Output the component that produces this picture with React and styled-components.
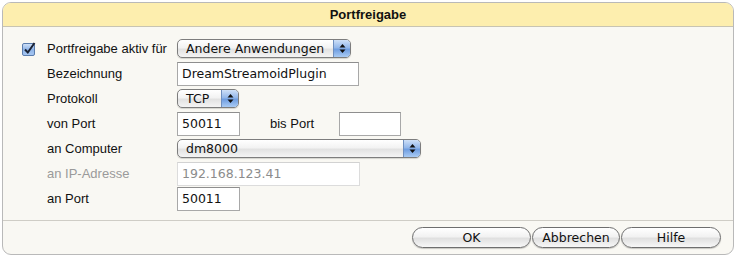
import React from "react";
import styled, { createGlobalStyle } from "styled-components";

const GlobalStyle = createGlobalStyle`
  html, body {
    margin: 0;
    padding: 0;
    background: #ffffff;
  }
  body {
    font-family: "Liberation Sans", Arial, sans-serif;
    font-size: 13px;
    color: #111;
  }
`;

const Panel = styled.div`
  margin: 2px;
  width: 730px;
  height: 251px;
  border: 1px solid #b9b9b9;
  border-radius: 9px;
  background: #f9f8f3;
  overflow: hidden;
  display: flex;
  flex-direction: column;
`;

const Header = styled.div`
  height: 23px;
  background: #fdeeae;
  border-bottom: 1px solid #c8c4b2;
  display: flex;
  align-items: center;
  justify-content: center;
  font-weight: bold;
  font-size: 13px;
  color: #111;
`;

const Form = styled.div`
  padding: 9px 0 9px 19px;
  display: flex;
  flex-direction: column;
  border-bottom: 1px solid #cfcdc6;
`;

const Row = styled.div`
  height: 25px;
  display: flex;
  align-items: center;
`;

const CheckSlot = styled.div`
  width: 25px;
  display: flex;
  align-items: center;
`;

const Label = styled.div`
  width: 130px;
  color: ${(p) => (p.$disabled ? "#9a9a9a" : "#111")};
`;

const MidLabel = styled.div`
  width: 99px;
  padding-left: 30px;
  box-sizing: border-box;
  color: #111;
`;

const Input = styled.div`
  box-sizing: border-box;
  width: ${(p) => p.$w}px;
  height: 24px;
  border: 1px solid ${(p) => (p.$disabled ? "#dcdcdc" : "#a8a8a8")};
  border-top-color: ${(p) => (p.$disabled ? "#d2d2d2" : "#8e8e8e")};
  background: #fff;
  font-family: "DejaVu Sans", "Lucida Grande", sans-serif;
  font-size: 12.5px;
  color: ${(p) => (p.$disabled ? "#8c8c8c" : "#111")};
  padding-left: 4px;
  display: flex;
  align-items: center;
`;

const Select = styled.div`
  box-sizing: border-box;
  width: ${(p) => p.$w}px;
  height: 19px;
  border: 1px solid #7d7d7d;
  border-radius: 5px;
  background: linear-gradient(#ffffff 0%, #f3f3f3 45%, #e2e2e2 55%, #f4f4f4 100%);
  display: flex;
  align-items: center;
  overflow: hidden;
  box-shadow: 0 1px 1px rgba(0, 0, 0, 0.15);
`;

const SelectText = styled.div`
  flex: 1;
  padding-left: 8px;
  font-family: "DejaVu Sans", "Lucida Grande", sans-serif;
  font-size: 12.5px;
  color: #111;
  white-space: nowrap;
`;

const Arrows = styled.div`
  width: 16px;
  height: 100%;
  border-left: 1px solid #6f8fbf;
  background: linear-gradient(#cfe0f7 0%, #93b7ea 45%, #6f9de0 55%, #a9cbf4 100%);
  display: flex;
  align-items: center;
  justify-content: center;
`;

const Footer = styled.div`
  flex: 1;
  display: flex;
  justify-content: flex-end;
  align-items: center;
  padding-right: 12px;
  gap: 1px;
`;

const Button = styled.div`
  box-sizing: border-box;
  width: ${(p) => p.$w}px;
  height: 21px;
  border: 1px solid #6e6e6e;
  border-radius: 11px;
  background: linear-gradient(#ffffff 0%, #f2f2f2 45%, #e0e0e0 55%, #f7f7f7 100%);
  display: flex;
  align-items: center;
  justify-content: center;
  font-family: "DejaVu Sans", "Lucida Grande", sans-serif;
  font-size: 12.5px;
  color: #111;
  box-shadow: 0 1px 1px rgba(0, 0, 0, 0.2);
`;

function UpDown() {
  return (
    <svg width="7" height="11" viewBox="0 0 7 11">
      <path d="M3.5 1 L6.5 4.5 L0.5 4.5 Z" fill="#111" />
      <path d="M3.5 10 L6.5 6.5 L0.5 6.5 Z" fill="#111" />
    </svg>
  );
}

function Checkbox() {
  return (
    <svg width="14" height="14" viewBox="0 0 14 14">
      <defs>
        <linearGradient id="cb" x1="0" y1="0" x2="0" y2="1">
          <stop offset="0" stopColor="#d4e4f8" />
          <stop offset="0.5" stopColor="#8fb4e8" />
          <stop offset="1" stopColor="#a8c8f2" />
        </linearGradient>
      </defs>
      <rect x="0.5" y="1.5" width="12" height="12" rx="1.5" fill="url(#cb)" stroke="#5b7dad" />
      <path d="M3 7.5 L5.8 10.5 L12.5 1" fill="none" stroke="#1a2233" strokeWidth="2" />
    </svg>
  );
}

function SelectBox({ w, children }) {
  return (
    <Select $w={w}>
      <SelectText>{children}</SelectText>
      <Arrows>
        <UpDown />
      </Arrows>
    </Select>
  );
}

export default function App() {
  return (
    <>
      <GlobalStyle />
      <Panel>
        <Header>Portfreigabe</Header>
        <Form>
          <Row>
            <CheckSlot>
              <Checkbox />
            </CheckSlot>
            <Label>Portfreigabe aktiv für</Label>
            <SelectBox w={174}>Andere Anwendungen</SelectBox>
          </Row>
          <Row>
            <CheckSlot />
            <Label>Bezeichnung</Label>
            <Input $w={182}>DreamStreamoidPlugin</Input>
          </Row>
          <Row>
            <CheckSlot />
            <Label>Protokoll</Label>
            <SelectBox w={62}>TCP</SelectBox>
          </Row>
          <Row>
            <CheckSlot />
            <Label>von Port</Label>
            <Input $w={63}>50011</Input>
            <MidLabel>bis Port</MidLabel>
            <Input $w={62}></Input>
          </Row>
          <Row>
            <CheckSlot />
            <Label>an Computer</Label>
            <SelectBox w={244}>dm8000</SelectBox>
          </Row>
          <Row>
            <CheckSlot />
            <Label $disabled>an IP-Adresse</Label>
            <Input $w={183} $disabled>
              192.168.123.41
            </Input>
          </Row>
          <Row>
            <CheckSlot />
            <Label>an Port</Label>
            <Input $w={63}>50011</Input>
          </Row>
        </Form>
        <Footer>
          <Button $w={119}>OK</Button>
          <Button $w={88}>Abbrechen</Button>
          <Button $w={100}>Hilfe</Button>
        </Footer>
      </Panel>
    </>
  );
}
